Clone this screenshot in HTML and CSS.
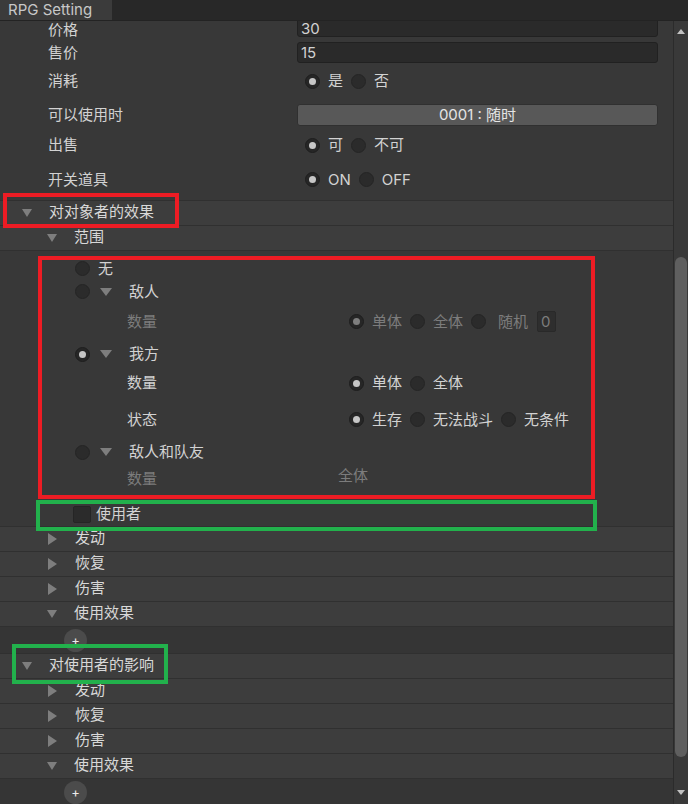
FILE: index.html
```html
<!DOCTYPE html>
<html lang="zh">
<head>
  <meta charset="UTF-8">
  <meta name="viewport" content="width=device-width, initial-scale=1.0">
  <title>RPG Setting</title>
  <link rel="stylesheet" href="styles.css">
</head>
<body>
  <div class="window">
    <div class="tabbar">
      <div class="tab">RPG Setting</div>
    </div>

    <div class="main">
      <div class="view">
        <div class="inner">
          <div class="field row-price">
            <span class="label">价格</span>
            <div class="input">30</div>
          </div>
          <div class="field row-sell">
            <span class="label">售价</span>
            <div class="input">15</div>
          </div>
          <div class="field row-consume">
            <span class="label">消耗</span>
            <div class="group">
              <span class="radio on"></span><span class="opt">是</span>
              <span class="radio"></span><span class="opt">否</span>
            </div>
          </div>
          <div class="field row-usable">
            <span class="label">可以使用时</span>
            <div class="popup">0001 : 随时</div>
          </div>
          <div class="field row-sale">
            <span class="label">出售</span>
            <div class="group">
              <span class="radio on"></span><span class="opt">可</span>
              <span class="radio"></span><span class="opt">不可</span>
            </div>
          </div>
          <div class="field row-switch">
            <span class="label">开关道具</span>
            <div class="group">
              <span class="radio on"></span><span class="opt">ON</span>
              <span class="radio"></span><span class="opt">OFF</span>
            </div>
          </div>

          <!-- 对对象者的效果 -->
          <div class="fold top"><span class="tri-down"></span><span class="fold-name">对对象者的效果</span></div>
          <div class="fold lv2"><span class="tri-down"></span><span class="fold-name">范围</span></div>

          <div class="scope">
            <div class="opt-row h23"><span class="radio"></span><span class="opt-text">无</span></div>
            <div class="opt-row h23"><span class="radio"></span><span class="tri-down small"></span><span class="opt-name">敌人</span></div>
            <div class="sub-row h37 dim">
              <span class="sub-label">数量</span>
              <div class="sub-group">
                <span class="radio on"></span><span class="opt">单体</span>
                <span class="radio"></span><span class="opt">全体</span>
                <span class="radio"></span><span class="opt wide">随机</span>
                <div class="num">0</div>
              </div>
            </div>
            <div class="opt-row h28"><span class="radio on"></span><span class="tri-down small"></span><span class="opt-name">我方</span></div>
            <div class="sub-row h30">
              <span class="sub-label">数量</span>
              <div class="sub-group">
                <span class="radio on"></span><span class="opt">单体</span>
                <span class="radio"></span><span class="opt">全体</span>
              </div>
            </div>
            <div class="sub-row h43">
              <span class="sub-label">状态</span>
              <div class="sub-group">
                <span class="radio on"></span><span class="opt">生存</span>
                <span class="radio"></span><span class="opt">无法战斗</span>
                <span class="radio"></span><span class="opt">无条件</span>
              </div>
            </div>
            <div class="opt-row h22"><span class="radio"></span><span class="tri-down small"></span><span class="opt-name">敌人和队友</span></div>
            <div class="sub-row h31 dim">
              <span class="sub-label">数量</span>
              <span class="sub-value">全体</span>
            </div>
            <div class="user-row"><span class="check"></span><span class="user-text">使用者</span></div>
          </div>

          <div class="fold lv2 first"><span class="tri-right"></span><span class="fold-name">发动</span></div>
          <div class="fold lv2"><span class="tri-right"></span><span class="fold-name">恢复</span></div>
          <div class="fold lv2"><span class="tri-right"></span><span class="fold-name">伤害</span></div>
          <div class="fold lv2"><span class="tri-down"></span><span class="fold-name">使用效果</span></div>
          <div class="add-row"><span class="add">+</span></div>

          <!-- 对使用者的影响 -->
          <div class="fold top"><span class="tri-down"></span><span class="fold-name">对使用者的影响</span></div>
          <div class="fold lv2"><span class="tri-right"></span><span class="fold-name">发动</span></div>
          <div class="fold lv2"><span class="tri-right"></span><span class="fold-name">恢复</span></div>
          <div class="fold lv2"><span class="tri-right"></span><span class="fold-name">伤害</span></div>
          <div class="fold lv2"><span class="tri-down"></span><span class="fold-name">使用效果</span></div>
          <div class="add-row"><span class="add">+</span></div>
        </div>
      </div>

      <div class="scrollbar">
        <div class="arrow-btn"><span class="arrow-up"></span></div>
        <div class="thumb"></div>
        <div class="arrow-btn bottom"><span class="arrow-down"></span></div>
      </div>
    </div>

    <!-- annotation boxes -->
    <div class="mark red mark-1"></div>
    <div class="mark red mark-2"></div>
    <div class="mark green mark-3"></div>
    <div class="mark green mark-4"></div>
  </div>
</body>
</html>
```

FILE: styles.css
```css
body {
  margin: 0;
  background: #383838;
  font-family: Inter, "Noto Sans CJK SC", sans-serif;
  font-size: 15px;
  line-height: 18px;
  color: #d2d2d2;
}

.window {
  position: relative;
  width: 688px;
  height: 804px;
  overflow: hidden;
  display: flex;
  flex-direction: column;
}

.tabbar {
  height: 20px;
  flex: none;
  background: #282828;
  border-bottom: 1px solid #232323;
  display: flex;
}

.tab {
  width: 112px;
  box-sizing: border-box;
  padding-left: 8px;
  background: #3b3b3b;
  color: #c8c8c8;
  line-height: 20px;
}

.main {
  flex: 1;
  display: flex;
  min-height: 0;
}

.view {
  flex: 1;
  overflow: hidden;
}

.inner {
  margin-top: -5px;
}

/* plain fields */
.field {
  display: flex;
  align-items: center;
  padding-left: 48px;
}

.label {
  width: 249px;
  flex: none;
}

.row-price { height: 23px; align-items: flex-start; }
.row-price .label { align-self: flex-end; }
.row-price .input { padding-top: 4px; line-height: 16px; }
.row-sell { height: 21px; margin-top: 3px; }
.row-consume { height: 36px; }
.row-usable { height: 32px; }
.row-sale { height: 28px; }
.row-switch { height: 41px; }

.input {
  width: 361px;
  height: 21px;
  box-sizing: border-box;
  padding-left: 3px;
  background: #2a2a2a;
  border: 1px solid #212121;
  border-radius: 3px;
  line-height: 19px;
}

.popup {
  width: 361px;
  height: 22px;
  box-sizing: border-box;
  background: #585858;
  border: 1px solid #303030;
  border-radius: 3px;
  text-align: center;
  line-height: 20px;
  color: #e4e4e4;
}

.group {
  display: flex;
  align-items: center;
  padding-left: 8px;
}

.opt {
  margin: 0 8px;
}

.opt.wide {
  margin: 0 9px 0 12px;
}

.radio {
  width: 15px;
  height: 15px;
  flex: none;
  box-sizing: border-box;
  border-radius: 50%;
  background: #2b2b2b;
  border: 1px solid #252525;
  display: flex;
  align-items: center;
  justify-content: center;
}

.radio.on {
  background: #262626;
  border-color: #1e1e1e;
}

.radio.on::after {
  content: "";
  width: 7px;
  height: 7px;
  border-radius: 50%;
  background: #c6c6c6;
}

/* foldouts */
.fold {
  height: 21px;
  padding-bottom: 3px;
  display: flex;
  align-items: center;
  background: #3d3d3d;
  border-bottom: 1px solid #303030;
  color: #d8d8d8;
}

.fold.top {
  padding-left: 22px;
  border-top: 1px solid #303030;
}

.fold.lv2 {
  padding-left: 47px;
}

.fold.first {
  border-top: 1px solid #303030;
}

.fold-name {
  margin-left: 17px;
}

.tri-right + .fold-name {
  margin-left: 18px;
}

.tri-down {
  width: 0;
  height: 0;
  margin-top: 2px;
  border-left: 5.5px solid transparent;
  border-right: 5.5px solid transparent;
  border-top: 8px solid #7e7e7e;
}

.tri-down.small {
  margin-top: 0;
  border-left-width: 6px;
  border-right-width: 6px;
  margin-left: 10px;
}

.tri-right {
  width: 0;
  height: 0;
  margin-left: 1px;
  margin-top: 2px;
  border-top: 6px solid transparent;
  border-bottom: 6px solid transparent;
  border-left: 9px solid #7e7e7e;
}

/* scope body */
.scope {
  padding-top: 6px;
}

.h22 { height: 22px; }
.h23 { height: 23px; }
.h28 { height: 28px; }
.h30 { height: 30px; }
.h31 { height: 31px; }
.h37 { height: 37px; }
.h43 { height: 43px; }

.opt-row {
  display: flex;
  align-items: center;
  padding-left: 75px;
}

.opt-text {
  margin-left: 8px;
}

.opt-name {
  margin-left: 17px;
}

.sub-row {
  display: flex;
  align-items: center;
  padding-left: 127px;
}

.sub-label {
  width: 213px;
  flex: none;
}

.sub-group {
  display: flex;
  align-items: center;
  padding-left: 9px;
}

.sub-value {
  margin-left: -2px;
  margin-top: -6px;
}

.dim {
  color: #7c7c7c;
}

.dim .radio.on::after {
  background: #7e7e7e;
}

.num {
  width: 19px;
  height: 21px;
  box-sizing: border-box;
  padding-left: 3px;
  background: #2e2e2e;
  border: 1px solid #292929;
  border-radius: 2px;
  line-height: 19px;
}

.user-row {
  height: 24px;
  margin-top: 8px;
  display: flex;
  align-items: center;
  padding-left: 73px;
}

.check {
  width: 18px;
  height: 17px;
  box-sizing: border-box;
  background: #2b2b2b;
  border: 1px solid #252525;
  border-radius: 2px;
}

.user-text {
  margin-left: 5px;
}

.add-row {
  height: 26px;
  display: flex;
  align-items: center;
  padding-left: 64px;
  background: #353535;
}

.add {
  width: 23px;
  height: 23px;
  border-radius: 50%;
  background: #4b4b4b;
  color: #ececec;
  font-size: 13px;
  line-height: 22px;
  text-align: center;
}

/* scrollbar */
.scrollbar {
  width: 14px;
  flex: none;
  border-left: 1px solid #2b2b2b;
  background: #393939;
  display: flex;
  flex-direction: column;
  align-items: center;
}

.arrow-btn {
  height: 20px;
  width: 100%;
  display: flex;
  align-items: center;
  justify-content: center;
}

.arrow-btn.bottom {
  margin-top: auto;
  height: 24px;
}

.arrow-up {
  width: 0;
  height: 0;
  border-left: 4.5px solid transparent;
  border-right: 4.5px solid transparent;
  border-bottom: 5px solid #c2c2c2;
}

.arrow-down {
  width: 0;
  height: 0;
  border-left: 4.5px solid transparent;
  border-right: 4.5px solid transparent;
  border-top: 5px solid #c2c2c2;
}

.thumb {
  width: 12px;
  height: 500px;
  margin-top: 216px;
  border-radius: 6px;
  background: #5f5f5f;
}

/* annotation boxes */
.mark {
  position: absolute;
  box-sizing: border-box;
  border: 4px solid;
}

.red { border-color: #ed1c24; }
.green { border-color: #22b14c; }

.mark-1 { left: 3px; top: 193px; width: 176px; height: 35px; }
.mark-2 { left: 38px; top: 256px; width: 557px; height: 243px; }
.mark-3 { left: 36px; top: 500px; width: 561px; height: 31px; }
.mark-4 { left: 12px; top: 644px; width: 156px; height: 40px; }
```
